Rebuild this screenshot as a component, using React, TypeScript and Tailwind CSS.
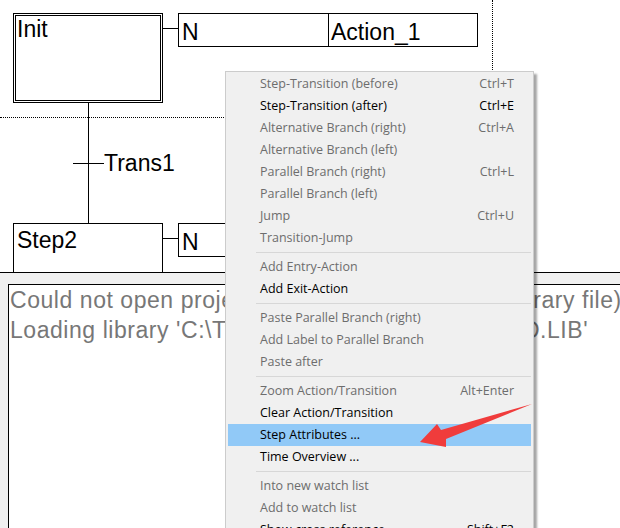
import React from "react";

type Item = { label: string; key?: string; on?: boolean; hot?: boolean } | "sep";

const MENU: Item[] = [
  { label: "Step-Transition (before)", key: "Ctrl+T" },
  { label: "Step-Transition (after)", key: "Ctrl+E", on: true },
  { label: "Alternative Branch (right)", key: "Ctrl+A" },
  { label: "Alternative Branch (left)" },
  { label: "Parallel Branch (right)", key: "Ctrl+L" },
  { label: "Parallel Branch (left)" },
  { label: "Jump", key: "Ctrl+U" },
  { label: "Transition-Jump" },
  "sep",
  { label: "Add Entry-Action" },
  { label: "Add Exit-Action", on: true },
  "sep",
  { label: "Paste Parallel Branch (right)" },
  { label: "Add Label to Parallel Branch" },
  { label: "Paste after" },
  "sep",
  { label: "Zoom Action/Transition", key: "Alt+Enter" },
  { label: "Clear Action/Transition", on: true },
  { label: "Step Attributes ...", on: true, hot: true },
  { label: "Time Overview ...", on: true },
  "sep",
  { label: "Into new watch list" },
  { label: "Add to watch list" },
  { label: "Show cross reference", key: "Shift+F2", on: true },
];

const diagramFont = "font-['Liberation_Sans',Arial,sans-serif] text-[23px] leading-none text-black";

/* SFC diagram: the nodes sit at their canvas positions */
function Diagram() {
  return (
    <div className="relative h-[272px] bg-white overflow-hidden">
      {/* page boundary */}
      <div className="absolute left-0 top-[117px] w-[492px] border-t border-dotted border-black" />
      <div className="absolute left-[492px] top-0 h-[118px] border-l border-dotted border-black" />

      {/* Init step */}
      <div className="absolute left-[13px] top-[13px] w-[150px] h-[90px] border-[3px] border-double border-black">
        <span className={`absolute left-[1px] top-[2px] ${diagramFont}`}>Init</span>
      </div>
      <div className="absolute left-[163px] top-[28px] w-[15px] border-t border-black" />
      <ActionBox top={13} name="Action_1" />

      {/* link + transition */}
      <div className="absolute left-[88px] top-[103px] h-[120px] border-l border-black" />
      <div className="absolute left-[73px] top-[163px] w-[31px] border-t border-black" />
      <span className={`absolute left-[104px] top-[152px] ${diagramFont}`}>Trans1</span>

      {/* Step2 */}
      <div className="absolute left-[13px] top-[223px] w-[150px] h-[80px] border border-black">
        <span className={`absolute left-[3px] top-[5px] ${diagramFont}`}>Step2</span>
      </div>
      <div className="absolute left-[163px] top-[238px] w-[15px] border-t border-black" />
      <ActionBox top={223} name="" />
    </div>
  );
}

function ActionBox({ top, name }: { top: number; name: string }) {
  return (
    <div
      className="absolute left-[178px] w-[300px] h-[34px] border border-black flex"
      style={{ top }}
    >
      <div className="w-[150px] border-r border-black pl-[3px] pt-[7px]">
        <span className={diagramFont}>N</span>
      </div>
      <div className="flex-1 pl-[2px] pt-[7px]">
        <span className={diagramFont}>{name}</span>
      </div>
    </div>
  );
}

function ContextMenu() {
  return (
    <div className="absolute left-[225px] top-[71px] w-[309px] h-[470px] bg-[#f0f0f0] border border-[#cccccc] px-[2px] pt-px shadow-[3px_3px_2px_rgba(0,0,0,0.35)] font-['Open_Sans','Noto_Sans',sans-serif] text-[12.5px]">
      {MENU.map((it, i) =>
        it === "sep" ? (
          <div key={i} className="h-[7px] flex items-center pl-[28px]">
            <div className="w-full h-px bg-[#d7d7d7]" />
          </div>
        ) : (
          <div
            key={i}
            className={`h-[22px] flex items-center pl-[32px] pr-[17px] ${it.hot ? "bg-[#91c9f7]" : ""} ${it.on ? "text-black" : "text-[#6d6d6d]"}`}
          >
            <span className="flex-1 whitespace-nowrap">{it.label}</span>
            {it.key && <span className="whitespace-nowrap">{it.key}</span>}
          </div>
        )
      )}
    </div>
  );
}

export default function App() {
  return (
    <div className="relative w-[620px] h-[528px] overflow-hidden bg-[#f0f0f0]">
      <Diagram />
      <div className="h-px bg-black" />

      {/* message window */}
      <div className="pt-[11px] pl-2">
        <div className="h-[250px] bg-white border-l border-t border-black pl-px overflow-hidden font-['Liberation_Sans',Arial,sans-serif] text-[23px] leading-[30px] tracking-[0.55px] text-[#777777] whitespace-nowrap">
          <p>Could not open project 'Untitled1.pro' (is not a library file)</p>
          <p>Loading library 'C:\TwinCAT\PLC\LIB\STANDARD.LIB'</p>
        </div>
      </div>

      <ContextMenu />

      {/* red annotation arrow */}
      <svg className="absolute inset-0 pointer-events-none" width="620" height="528" viewBox="0 0 620 528">
        <polygon points="420,442 437,424 441,430 532,404 446,439 446,447" fill="#f03c3c" />
      </svg>
    </div>
  );
}
